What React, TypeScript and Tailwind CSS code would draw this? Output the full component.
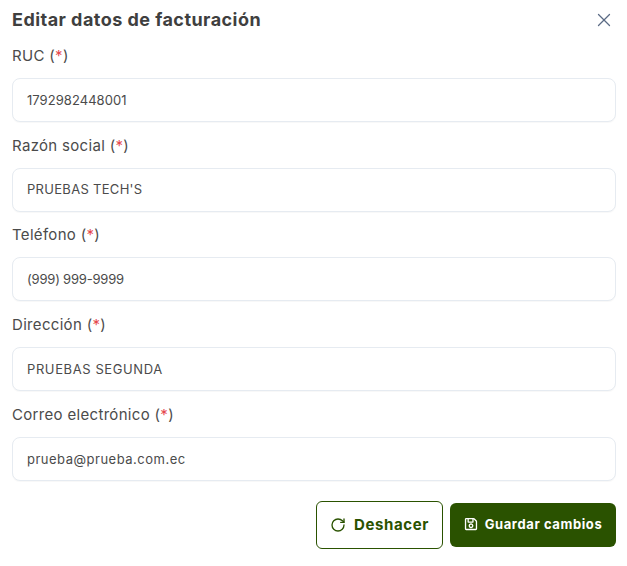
import { RotateCw, X } from 'lucide-react';
import { FaRegSave } from 'react-icons/fa';

const fields = [
  { label: 'RUC', value: '1792982448001', tracking: 'tracking-[0.05px]' },
  { label: 'Razón social', value: "PRUEBAS TECH'S", tracking: 'tracking-[0.3px]' },
  { label: 'Teléfono', value: '(999) 999-9999', tracking: 'tracking-[-0.2px]' },
  { label: 'Dirección', value: 'PRUEBAS SEGUNDA', tracking: 'tracking-[0.6px]' },
  { label: 'Correo electrónico', value: 'prueba@prueba.com.ec', tracking: 'tracking-[0.5px]' },
];

const App = () => {
  return (
    <div className="w-[627px] h-[566px] bg-white px-3 pt-[9px] font-['Inter',sans-serif] text-[#3f3f3f] overflow-hidden">
      <div className="flex items-center justify-between h-[22px]">
        <h2 className="text-lg font-bold tracking-[0.46px] leading-[22px]">Editar datos de facturación</h2>
        <button className="mr-[0px] -my-1 text-[#5b6b85]">
          <X className="w-[22px] h-[22px]" strokeWidth={1.4} />
        </button>
      </div>
      <form className="mt-[13px] flex flex-col gap-[11.7px]">
        {fields.map((f) => (
          <div key={f.label} className="flex flex-col">
            <label className="h-[24px] leading-[24px] text-[15px] tracking-[0.32px] text-[#4b4b4b]">
              {f.label} (<span className="text-[#e5484d]">*</span>)
            </label>
            <div className={`mt-[10px] h-[44px] mr-[-1px] rounded-lg border border-[#e6ebf1] bg-white flex items-center pl-[14px] pt-px text-[13px] text-[#4b4b4b] shadow-[0_1px_1px_rgba(0,0,0,0.03)] ${f.tracking}`}>
              {f.value}
            </div>
          </div>
        ))}
      </form>
      <div className="mt-5 flex justify-end gap-[7px] items-center mr-[-1px]">
        <button className="w-[127px] h-[48px] rounded-md border border-[#2a5200] flex items-center justify-center gap-2 text-[#2a5200] font-bold text-[15px] tracking-[0.6px]">
          <RotateCw className="w-4 h-4" strokeWidth={2} />
          Deshacer
        </button>
        <button className="w-[166px] h-[44px] rounded-md bg-[#2a5200] flex items-center justify-center gap-[7px] text-white font-bold text-[13px] tracking-[0.6px]">
          <FaRegSave className="w-[14px] h-[14px] mb-[2px]" />
          Guardar cambios
        </button>
      </div>
    </div>
  );
};

export default App;
